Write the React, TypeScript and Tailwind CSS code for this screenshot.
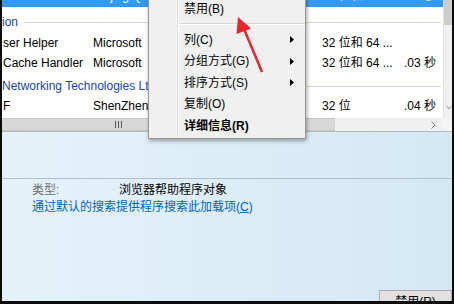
import React from "react";

const font = "font-['Liberation_Sans','Noto_Sans_CJK_SC',sans-serif]";

type Row = { name: string; pub: string; arch: string; time: string };

const ListRow = ({ row }: { row: Row }) => (
  <div className="flex h-[20px] items-center text-[12px] leading-[14px] text-black whitespace-nowrap">
    <div className="w-[91px] overflow-hidden pl-[1px]">{row.name}</div>
    <div className="w-[229px] overflow-hidden">{row.pub}</div>
    <div className="w-[81px] overflow-hidden">{row.arch}</div>
    <div className="flex-1 overflow-hidden pl-[1px]">{row.time}</div>
  </div>
);

const GroupHeader = ({ label, className }: { label: string; className: string }) => (
  <div className={`flex items-center ${className}`}>
    <span className="text-[12px] leading-[14px] text-[#2446a6] whitespace-nowrap">{label}</span>
    <div className="ml-[6px] mr-[2px] h-px flex-1 bg-[#cfd6e2]" />
  </div>
);

const MenuItem = ({
  label,
  sub,
  bold,
}: {
  label: string;
  sub?: boolean;
  bold?: boolean;
}) => (
  <div className="flex h-[21.5px] items-center pl-[5px] pr-[11px]">
    <span className={`flex-1 text-[12px] leading-[14px] text-black ${bold ? "font-bold" : ""}`}>
      {label}
    </span>
    {sub && (
      <svg width="4" height="7" viewBox="0 0 4 7">
        <polygon points="0,0 4,3.5 0,7" fill="#000" />
      </svg>
    )}
  </div>
);

export default function App() {
  return (
    <div className={`relative h-[304px] w-[454px] overflow-hidden bg-[#0c0c0c] pl-[2px] pr-[2px] pb-[3px] ${font}`}>
      <div className="flex h-full flex-col">
        {/* list + vertical scrollbar */}
        <div className="flex h-[118px]">
          <div className="flex-1 overflow-hidden bg-white">
            <div className="h-[7px] overflow-hidden bg-[#3399ff]">
              <div className="mt-[-14px] flex h-[20px] items-center text-[12px] leading-[14px] text-white whitespace-nowrap">
                <div className="w-[91px] pl-[1px]" />
                <div className="w-[229px]">Beijing Qihu 360 Soft</div>
                <div className="w-[81px]">32 位和 64 ...</div>
                <div className="flex-1 pl-[1px]">.09 秒</div>
              </div>
            </div>
            <GroupHeader label="ion" className="h-[26px] pt-[4px]" />
            <ListRow row={{ name: "ser Helper", pub: "Microsoft", arch: "32 位和 64 ...", time: "" }} />
            <ListRow row={{ name: " Cache Handler", pub: "Microsoft", arch: "32 位和 64 ...", time: ".03 秒" }} />
            <GroupHeader label=" Networking Technologies Ltd" className="h-[23px] pt-[3px]" />
            <ListRow row={{ name: "F", pub: "ShenZhen", arch: "32 位", time: ".04 秒" }} />
          </div>
          <div className="flex w-[9px] flex-col border-l border-[#e0e0e0] bg-[#f0f0f0]">
            <div className="h-[25px] bg-[#cdcdcd]" />
            <div className="flex-1" />
            <div className="flex h-[22px] items-center pl-[2px] text-[#777]">
              <svg width="7" height="5" viewBox="0 0 7 5">
                <polyline points="0.5,0.5 3.5,4 6.5,0.5" fill="none" stroke="#7a7a7a" strokeWidth="1" />
              </svg>
            </div>
          </div>
        </div>

        {/* horizontal scrollbar */}
        <div className="flex h-[14px] border-b border-[#b8b8b8] bg-[#f0f0f0]">
          <div className="flex w-[333px] items-center border-y border-[#c6c6c6] bg-[#d8d8d8] pl-[113px]">
            <div className="flex gap-[2px]">
              <div className="h-[7px] w-px bg-[#555]" />
              <div className="h-[7px] w-px bg-[#555]" />
              <div className="h-[7px] w-px bg-[#555]" />
            </div>
          </div>
          <div className="flex w-[108px] items-center justify-end pr-[7px]">
            <svg width="5" height="8" viewBox="0 0 5 8">
              <polyline points="0.5,0.5 4,4 0.5,7.5" fill="none" stroke="#7a7a7a" strokeWidth="1" />
            </svg>
          </div>
          <div className="flex-1 bg-[#f4f4f4]" />
        </div>

        {/* details pane */}
        <div className="flex flex-1 flex-col overflow-hidden bg-linear-to-r from-[#e5f2fa] to-[#d4e8f5]">
          <div className="h-[46px]" />
          <div className="h-px bg-[#b3bec8]" />
          <div className="flex h-[18px] items-end pl-[30px] text-[12px] leading-[14px]">
            <span className="w-[87px] text-[#707070]">类型:</span>
            <span className="text-black">浏览器帮助程序对象</span>
          </div>
          <div className="flex h-[19px] items-center pl-[30px] text-[12px] leading-[14px] text-[#0066cc]">
            <span>
              通过默认的搜索提供程序搜索此加载项(<span className="underline">C</span>)
            </span>
          </div>
          <div className="flex-1" />
          <div className="mb-[-12px] flex justify-end">
            <button className="h-[23px] w-[73px] border border-[#adadad] bg-[#e1e1e1] text-[12px] leading-[14px] text-black">
              禁用(R)
            </button>
          </div>
        </div>
      </div>

      {/* context menu */}
      <div className="absolute left-[148px] top-[-5px] flex h-[144px] w-[158px] border border-[#979797] bg-[#f0f0f0] shadow-[1px_2px_4px_rgba(0,0,0,0.35)]">
        <div className="w-[28px]" />
        <div className="w-px bg-[#e2e3e3]" />
        <div className="w-px bg-white" />
        <div className="flex flex-1 flex-col pt-[2px]">
          <MenuItem label="禁用(B)" />
          <div className="flex h-[9.5px] flex-col justify-center">
            <div className="h-px bg-[#d7d7d7]" />
            <div className="h-px bg-white" />
          </div>
          <MenuItem label="列(C)" sub />
          <MenuItem label="分组方式(G)" sub />
          <MenuItem label="排序方式(S)" sub />
          <MenuItem label="复制(O)" />
          <MenuItem label="详细信息(R)" bold />
        </div>
      </div>

      {/* red annotation arrow */}
      <svg className="pointer-events-none absolute left-0 top-0" width="454" height="304">
        <line x1="262" y1="72" x2="244" y2="29" stroke="#e8262b" strokeWidth="2.5" />
        <polygon points="238,17 236.5,34 251,28.5" fill="#e8262b" />
      </svg>
    </div>
  );
}
